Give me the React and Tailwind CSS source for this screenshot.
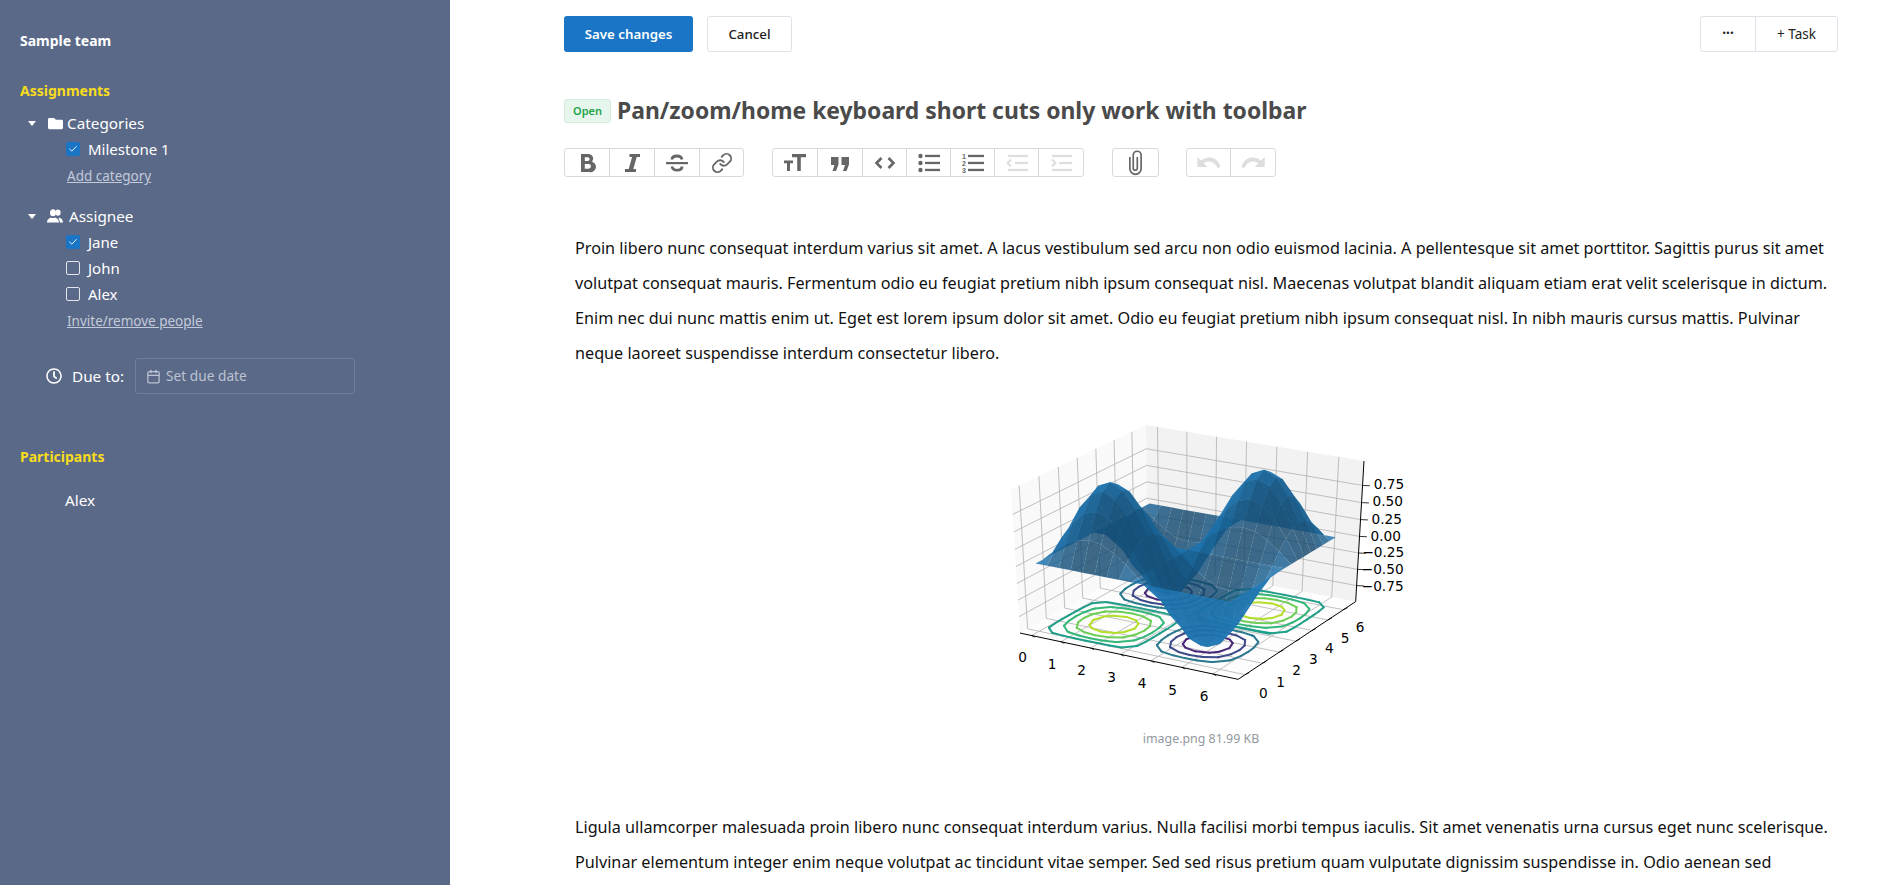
import { Check, Link, Calendar } from 'lucide-react'
import { FaFolder, FaRegClock } from 'react-icons/fa'

const FONT = 'font-["Noto_Sans",sans-serif]'

// --- 3d chart (same idea as the matplotlib example: z = sin x * sin y) ---
const D2R = Math.PI / 180
const XLIM = [-0.4, 6.8]
const ZLIM = [-1, 1.1]

function makeProjector() {
  const el = 30 * D2R
  const az = -60 * D2R
  const dist = 10
  const eye = [dist * Math.cos(el) * Math.cos(az), dist * Math.cos(el) * Math.sin(az), dist * Math.sin(el)]
  const n = eye.map((v) => v / dist)
  const up = [0, 0, 1]
  const u = [up[1] * n[2] - up[2] * n[1], up[2] * n[0] - up[0] * n[2], up[0] * n[1] - up[1] * n[0]]
  const ul = Math.hypot(...u)
  const ux = u.map((v) => v / ul)
  const vy = [n[1] * ux[2] - n[2] * ux[1], n[2] * ux[0] - n[0] * ux[2], n[0] * ux[1] - n[1] * ux[0]]
  const raw = (a, b, c) => {
    const p = [a - 0.5 - eye[0], b - 0.5 - eye[1], c - 0.5 - eye[2]]
    const d = -(p[0] * n[0] + p[1] * n[1] + p[2] * n[2])
    return [(p[0] * ux[0] + p[1] * ux[1] + p[2] * ux[2]) / d, (p[0] * vy[0] + p[1] * vy[1] + p[2] * vy[2]) / d, d]
  }
  // fit to the corners read off the picture
  const A = raw(0, 0, 0)
  const B = raw(1, 0, 0)
  const C = raw(1, 1, 0)
  const T = raw(0, 1, 1)
  const sx = (1097 - 90) / (C[0] - A[0])
  const sy = (808 - 45) / (T[1] - B[1])
  return (a, b, c) => {
    const r = raw(a, b, c)
    return [90 + (r[0] - A[0]) * sx, 808 - (r[1] - B[1]) * sy, r[2]]
  }
}

const proj = makeProjector()
const nx = (x) => (x - XLIM[0]) / (XLIM[1] - XLIM[0])
const nz = (z) => (z - ZLIM[0]) / (ZLIM[1] - ZLIM[0])
const world = (x, y, z) => proj(nx(x), nx(y), nz(z))
const pts = (list) => list.map((p) => `${p[0].toFixed(1)},${p[1].toFixed(1)}`).join(' ')

const GRID = 16
const f = (x, y) => Math.sin(x) * Math.sin(y)
const step = (2 * Math.PI) / GRID

function buildSurface() {
  const light = [-0.6667, 0.6667, 0.3333]
  const quads = []
  for (let i = 0; i < GRID; i++) {
    for (let j = 0; j < GRID; j++) {
      const c = [
        [i * step, j * step],
        [(i + 1) * step, j * step],
        [(i + 1) * step, (j + 1) * step],
        [i * step, (j + 1) * step],
      ].map(([x, y]) => [x, y, f(x, y)])
      const a = [c[2][0] - c[0][0], c[2][1] - c[0][1], c[2][2] - c[0][2]]
      const b = [c[3][0] - c[1][0], c[3][1] - c[1][1], c[3][2] - c[1][2]]
      const nrm = [a[1] * b[2] - a[2] * b[1], a[2] * b[0] - a[0] * b[2], a[0] * b[1] - a[1] * b[0]]
      const len = Math.hypot(...nrm)
      const shade = (nrm[0] * light[0] + nrm[1] * light[1] + nrm[2] * light[2]) / len
      const k = Math.min(1, 0.75 + 0.6 * shade)
      const screen = c.map((p) => world(p[0], p[1], p[2] * 1.07 + 0.02))
      const depth = screen.reduce((s, p) => s + p[2], 0) / 4
      quads.push({
        depth,
        points: pts(screen),
        fill: `rgb(${Math.round(31 * k)},${Math.round(119 * k)},${Math.round(180 * k)})`,
      })
    }
  }
  return quads.sort((p, q) => q.depth - p.depth)
}

function contourSegments(level) {
  const segs = []
  const cross = (x1, y1, x2, y2) => {
    const a = f(x1, y1) - level
    const b = f(x2, y2) - level
    if (a > 0 === b > 0) return null
    const t = a / (a - b)
    return [x1 + (x2 - x1) * t, y1 + (y2 - y1) * t]
  }
  for (let i = 0; i < GRID; i++) {
    for (let j = 0; j < GRID; j++) {
      const x0 = i * step
      const y0 = j * step
      const x1 = x0 + step
      const y1 = y0 + step
      const hits = [cross(x0, y0, x1, y0), cross(x1, y0, x1, y1), cross(x1, y1, x0, y1), cross(x0, y1, x0, y0)].filter(Boolean)
      if (hits.length >= 2) segs.push([hits[0], hits[1]])
      if (hits.length === 4) segs.push([hits[2], hits[3]])
    }
  }
  return segs
}

const LEVELS = [
  [-0.75, '#482878'],
  [-0.5, '#3e4a89'],
  [-0.25, '#2a788e'],
  [0.03, '#1f9e89'],
  [0.25, '#35b779'],
  [0.5, '#6ece58'],
  [0.75, '#b5de2b'],
]

function Chart() {
  const surface = buildSurface()
  const zBottom = ZLIM[0]
  const lo = XLIM[0]
  const hi = XLIM[1]
  const ticks = [0, 1, 2, 3, 4, 5, 6]
  const zTicks = [-0.75, -0.5, -0.25, 0, 0.25, 0.5, 0.75]
  const xLabels = [[98, 745], [186, 765], [275, 783], [365, 803], [456, 822], [548, 842], [642, 862]]
  const yLabels = [[820, 853], [872, 818], [920, 783], [970, 751], [1018, 718], [1065, 687], [1110, 655]]
  const zLabels = [
    ['0.75', 1197, 225], ['0.50', 1193, 277], ['0.25', 1190, 329], ['0.00', 1187, 380],
    ['\u22120.25', 1180, 430], ['\u22120.50', 1178, 480], ['\u22120.75', 1178, 530],
  ]
  const line = (a, b, key, stroke = '#b0b0b0', w = 2.4) => (
    <line key={key} x1={a[0]} y1={a[1]} x2={b[0]} y2={b[1]} stroke={stroke} strokeWidth={w} />
  )
  const zero1 = world(Math.PI, Math.PI, zBottom)
  const zero2 = world(5.9, Math.PI, zBottom)
  const zero3 = world(Math.PI, 4.9, zBottom)
  return (
    <svg viewBox="-27 0 1320 930" className="w-[440px] h-[310px] block mx-auto">
      <polygon points={pts([world(lo, lo, zBottom), world(lo, hi, zBottom), world(lo, hi, ZLIM[1]), world(lo, lo, ZLIM[1])])} fill="#f9f9f9" />
      <polygon points={pts([world(lo, hi, zBottom), world(hi, hi, zBottom), world(hi, hi, ZLIM[1]), world(lo, hi, ZLIM[1])])} fill="#f2f2f2" />
      <polygon points={pts([world(lo, lo, zBottom), world(hi, lo, zBottom), world(hi, hi, zBottom), world(lo, hi, zBottom)])} fill="#fdfdfd" />
      {ticks.map((t) => [
        line(world(t, lo, zBottom), world(t, hi, zBottom), `gx${t}`),
        line(world(t, hi, zBottom), world(t, hi, ZLIM[1]), `gxz${t}`),
        line(world(lo, t, zBottom), world(hi, t, zBottom), `gy${t}`),
        line(world(lo, t, zBottom), world(lo, t, ZLIM[1]), `gyz${t}`),
      ])}
      {zTicks.map((t) => [
        line(world(lo, lo, t), world(lo, hi, t), `gzl${t}`),
        line(world(lo, hi, t), world(hi, hi, t), `gzb${t}`),
        line(world(hi, hi, t), [world(hi, hi, t)[0] + 22, world(hi, hi, t)[1] + 1], `tz${t}`, '#000', 2.4),
      ])}
      {line(world(lo, lo, zBottom), world(hi, lo, zBottom), 'ax', '#000', 3)}
      {line(world(hi, lo, zBottom), world(hi, hi, zBottom), 'ay', '#000', 3)}
      {line(world(hi, hi, zBottom), world(hi, hi, ZLIM[1]), 'az', '#000', 3)}
      {ticks.map((t) => [
        line(world(t, lo, zBottom), [world(t, lo, zBottom)[0] + 10, world(t, lo, zBottom)[1] + 5], `tx${t}`, '#000', 2.4),
        line(world(hi, t, zBottom), [world(hi, t, zBottom)[0] + 12, world(hi, t, zBottom)[1] - 6], `ty${t}`, '#000', 2.4),
      ])}
      {LEVELS.map(([level, color]) => (
        <g key={level} stroke={color} strokeWidth="6" strokeLinecap="round">
          {contourSegments(level).map((s, i) => {
            const a = world(s[0][0], s[0][1], zBottom)
            const b = world(s[1][0], s[1][1], zBottom)
            return <line key={i} x1={a[0]} y1={a[1]} x2={b[0]} y2={b[1]} />
          })}
        </g>
      ))}
      {line(zero1, zero2, 'z0a', '#1f9e89', 6)}
      {line(zero1, zero3, 'z0b', '#1f9e89', 6)}
      {surface.map((q, i) => (
        <polygon key={i} points={q.points} fill={q.fill} fillOpacity="0.82" />
      ))}
      <g fontFamily="'DejaVu Sans', sans-serif" fontSize="41" fill="#000" textAnchor="middle" dominantBaseline="middle">
        {xLabels.map(([x, y], i) => <text key={i} x={x} y={y}>{i}</text>)}
        {yLabels.map(([x, y], i) => <text key={i} x={x} y={y}>{i}</text>)}
        {zLabels.map(([s, x, y]) => <text key={s} x={x} y={y}>{s}</text>)}
      </g>
    </svg>
  )
}

// --- toolbar icons ---
const icons = {
  bold: <path fillRule="evenodd" d="M6 3h7.500a4.700 4.700 0 0 1 3.600 7.800A5 5 0 0 1 14.200 21H6V3zm3.800 3.200v3.700h3a1.850 1.850 0 0 0 0-3.700h-3zm0 6.700v4.900h3.700a2.450 2.450 0 0 0 0-4.900H9.800z" />,
  italic: <path d="M9.500 3H20v3h-3.300l-3.400 12H16v3H5v-3h3.700l3.400-12H9.500z" />,
  strike: (
    <>
      <rect x="1" y="11" width="22" height="2.200" />
      <path fill="none" stroke="currentColor" strokeWidth="2.800" d="M17 8.500C16.500 6 14.500 5 12 5 9.200 5 7 6.300 7 8.500M7 15.500C7.500 18 9.500 19.200 12 19.200c2.800 0 5-1.300 5-3.700" />
    </>
  ),
  heading: <path d="M9 3h14v3.300h-5.200V20h-3.600V6.300H9zM1 9.500h9v2.700H7V20H4v-7.800H1z" />,
  quote: <path d="M3 6h7.500v7.500L8 20H4.500l2-6H3zM13.500 6H21v7.500L18.500 20H15l2-6h-3.500z" />,
  code: <path fill="none" stroke="currentColor" strokeWidth="2.600" d="M8.500 7 3.500 12 8.500 17M15.500 7l5 5-5 5" />,
  bullets: (
    <>
      <circle cx="3.500" cy="5" r="2.200" /><circle cx="3.500" cy="12" r="2.200" /><circle cx="3.500" cy="19" r="2.200" />
      <rect x="8" y="3.800" width="15" height="2.300" /><rect x="8" y="10.800" width="15" height="2.300" /><rect x="8" y="17.800" width="15" height="2.300" />
    </>
  ),
  numbers: (
    <>
      <text x="1" y="7.500" fontSize="7" fontFamily="'Liberation Sans', sans-serif" fontWeight="700">1</text>
      <text x="1" y="14.500" fontSize="7" fontFamily="'Liberation Sans', sans-serif" fontWeight="700">2</text>
      <text x="1" y="21.500" fontSize="7" fontFamily="'Liberation Sans', sans-serif" fontWeight="700">3</text>
      <rect x="7" y="3.800" width="16" height="2.300" /><rect x="7" y="10.800" width="16" height="2.300" /><rect x="7" y="17.800" width="16" height="2.300" />
    </>
  ),
  outdent: (
    <>
      <rect x="3" y="3.800" width="20" height="2.300" /><rect x="10" y="10.800" width="13" height="2.300" /><rect x="3" y="17.800" width="20" height="2.300" />
      <path fill="none" stroke="currentColor" strokeWidth="2" d="M6 8.500 2.500 12 6 15.500" />
    </>
  ),
  indent: (
    <>
      <rect x="3" y="3.800" width="20" height="2.300" /><rect x="10" y="10.800" width="13" height="2.300" /><rect x="3" y="17.800" width="20" height="2.300" />
      <path fill="none" stroke="currentColor" strokeWidth="2" d="M3 8.500 6.500 12 3 15.500" />
    </>
  ),
  clip: <path fill="none" stroke="currentColor" strokeWidth="1.500" d="M7 7v10.500a5 5 0 0 0 10 0V5.500a3.500 3.500 0 0 0-7 0v11.500a1.800 1.800 0 0 0 3.600 0V7" />,
  undo: <path d="M2 7v9h9l-3.300-3.300c2-1.400 4-1.800 6-1.400 2.800.5 5 2.400 6.600 5.700l2.400-1.500C21 10.500 17.500 7.800 13.500 7.500 10.500 7.300 7.800 8.200 5.500 10.300z" />,
}

function TbIcon({ name, flip, big }) {
  return (
    <svg viewBox="0 0 24 24" fill="currentColor" className={`${big ? 'w-[27px] h-[27px]' : 'w-[24px] h-[24px]'} ${flip ? '-scale-x-100' : ''}`}>
      {icons[name]}
    </svg>
  )
}

function TbGroup({ children, className = '' }) {
  return (
    <div className={`flex h-[29px] rounded-[3px] border border-[#d9d9d9] divide-x divide-[#d9d9d9] ${className}`}>
      {children}
    </div>
  )
}

function TbBtn({ w, muted, children }) {
  return (
    <div className={`flex items-center justify-center ${w} ${muted ? 'text-[#dedede]' : 'text-[#666666]'}`}>
      {children}
    </div>
  )
}

function Box({ checked }) {
  return (
    <span className={`flex items-center justify-center w-[14px] h-[14px] rounded-[2px] ${checked ? 'bg-[#1b75c7]' : 'border border-[#e2e5ec]'}`}>
      {checked && <Check className="w-[10px] h-[10px] text-white" strokeWidth={2.2} />}
    </span>
  )
}

function CheckRow({ label, checked }) {
  return (
    <div className="flex items-center h-[26px] pl-[66px] text-[15px] text-white">
      <Box checked={checked} />
      <span className="ml-2">{label}</span>
    </div>
  )
}

function Caret() {
  return <span className="w-0 h-0 border-x-[4px] border-x-transparent border-t-[5px] border-t-white ml-[28px]" />
}

function SideLink({ children }) {
  return <div className="flex items-center h-[26px] pt-[3px] pl-[67px] text-[13.5px] text-[#c3cada] underline">{children}</div>
}

function PeopleIcon() {
  return (
    <svg viewBox="0 0 16 14" fill="currentColor" className="ml-[11px] w-[16px] h-[14px]">
      <ellipse cx="6" cy="3.800" rx="3" ry="3.500" />
      <path d="M0 13.500c0-3 2-4.200 3.800-5 1.400.8 3 .8 4.400 0 1.800.8 3.800 2 3.800 5z" />
      <ellipse cx="11" cy="3.600" rx="2.600" ry="3.200" />
      <path d="M12.800 13.500H16c0-3-1.600-4-3.200-4.800-.8.4-1 .5-1.800.4 1.300 1 1.800 2.600 1.800 4.400z" />
    </svg>
  )
}

function Sidebar() {
  return (
    <aside className="w-[450px] shrink-0 h-full bg-[#5a6987] pt-[27px] text-white">
      <div className="pl-5 h-[26px] flex items-center text-[14px] font-bold">Sample team</div>
      <div className="pl-5 mt-[24px] h-[26px] flex items-center text-[14px] font-bold text-[#f7dc1e]">Assignments</div>
      <div className="mt-[7px] h-[26px] flex items-center text-[15.3px]">
        <Caret />
        <FaFolder className="ml-[12px] w-[15px] h-[15px]" />
        <span className="ml-[4px]">Categories</span>
      </div>
      <CheckRow label="Milestone 1" checked />
      <SideLink>Add category</SideLink>
      <div className="mt-[15px] h-[26px] flex items-center text-[15.3px]">
        <Caret />
        <PeopleIcon />
        <span className="ml-[6px]">Assignee</span>
      </div>
      <CheckRow label="Jane" checked />
      <CheckRow label="John" />
      <CheckRow label="Alex" />
      <SideLink>Invite/remove people</SideLink>
      <div className="mt-[25px] flex items-center h-[36px] text-[15.3px]">
        <FaRegClock className="ml-[46px] w-[16px] h-[16px]" />
        <span className="ml-[10px]">Due to:</span>
        <div className="ml-[11px] w-[220px] h-[36px] flex items-center rounded-[3px] border border-[#727f9b] pl-[10px] text-[13.7px] text-[#bcc3d2]">
          <Calendar className="w-[15px] h-[15px]" />
          <span className="ml-[5px]">Set due date</span>
        </div>
      </div>
      <div className="pl-5 mt-[49px] h-[26px] flex items-center text-[14px] font-bold text-[#f7dc1e]">Participants</div>
      <div className="pl-[65px] mt-[18px] h-[26px] flex items-center text-[15.3px]">Alex</div>
    </aside>
  )
}

export default function App() {
  return (
    <div className={`flex h-screen overflow-hidden bg-white ${FONT}`}>
      <Sidebar />
      <main className="flex-1 min-w-0 pl-[114px] pr-[66px] pt-4">
        <div className="flex items-center justify-between h-9">
          <div className="flex gap-[14px]">
            <button className="w-[129px] h-9 pt-px rounded-[3px] bg-[#1b75c7] text-white text-[13.3px] font-semibold">Save changes</button>
            <button className="w-[85px] h-9 pt-px rounded-[3px] border border-[#dfe1e8] text-[#222] text-[13.3px] font-medium">Cancel</button>
          </div>
          <div className="flex h-9 rounded-[3px] border border-[#dfe1e8] divide-x divide-[#dfe1e8] text-[13.5px] text-[#222]">
            <button className="w-[55px] font-bold leading-none">···</button>
            <button className="w-[81px] pt-px">+ Task</button>
          </div>
        </div>

        <div className="flex items-center mt-[47px] h-6">
          <span className="flex items-center justify-center w-[47px] h-6 rounded-[3px] border border-[#d3eedd] bg-[#e7f6ec] text-[11px] font-semibold text-[#22a24a]">Open</span>
          <h1 className="ml-[6px] pt-px text-[22.9px] font-bold text-[#4a4a4a] whitespace-nowrap">Pan/zoom/home keyboard short cuts only work with toolbar</h1>
        </div>

        <div className="flex mt-[25px]">
          <TbGroup>
            <TbBtn w="w-[45px]"><TbIcon name="bold" /></TbBtn>
            <TbBtn w="w-[45px]"><TbIcon name="italic" /></TbBtn>
            <TbBtn w="w-[45px]"><TbIcon name="strike" /></TbBtn>
            <TbBtn w="w-[43px]"><Link className="w-[22px] h-[22px]" strokeWidth={2} /></TbBtn>
          </TbGroup>
          <TbGroup className="ml-[28px]">
            <TbBtn w="w-[45px]"><TbIcon name="heading" /></TbBtn>
            <TbBtn w="w-[45px]"><TbIcon name="quote" /></TbBtn>
            <TbBtn w="w-[44px]"><TbIcon name="code" /></TbBtn>
            <TbBtn w="w-[44px]"><TbIcon name="bullets" /></TbBtn>
            <TbBtn w="w-[44px]"><TbIcon name="numbers" /></TbBtn>
            <TbBtn w="w-[44px]" muted><TbIcon name="outdent" /></TbBtn>
            <TbBtn w="w-[44px]" muted><TbIcon name="indent" /></TbBtn>
          </TbGroup>
          <TbGroup className="ml-[28px]">
            <TbBtn w="w-[45px]"><TbIcon name="clip" big /></TbBtn>
          </TbGroup>
          <TbGroup className="ml-[27px]">
            <TbBtn w="w-[44px]" muted><TbIcon name="undo" big /></TbBtn>
            <TbBtn w="w-[44px]" muted><TbIcon name="undo" flip big /></TbBtn>
          </TbGroup>
        </div>

        <div className="pl-[11px] mt-[54px] text-[16.2px] leading-[35px] text-[#111]">
          <p>
            Proin libero nunc consequat interdum varius sit amet. A lacus vestibulum sed arcu non odio euismod lacinia. A pellentesque sit amet porttitor. Sagittis purus sit amet volutpat consequat mauris. Fermentum odio eu feugiat pretium nibh ipsum consequat nisl. Maecenas volutpat blandit aliquam etiam erat velit scelerisque in dictum. Enim nec dui nunc mattis enim ut. Eget est lorem ipsum dolor sit amet. Odio eu feugiat pretium nibh ipsum consequat nisl. In nibh mauris cursus mattis. Pulvinar neque laoreet suspendisse interdum consectetur libero.
          </p>
        </div>

        <div className="mt-[39px]">
          <Chart />
          <div className="mt-[10px] text-center text-[12.4px] leading-[18px] text-[#93989f]">image.png 81.99 KB</div>
        </div>

        <div className="pl-[11px] mt-[62px] text-[16.2px] leading-[35px] text-[#111]">
          <p>
            Ligula ullamcorper malesuada proin libero nunc consequat interdum varius. Nulla facilisi morbi tempus iaculis. Sit amet venenatis urna cursus eget nunc scelerisque. Pulvinar elementum integer enim neque volutpat ac tincidunt vitae semper. Sed sed risus pretium quam vulputate dignissim suspendisse in. Odio aenean sed
          </p>
        </div>
      </main>
    </div>
  )
}
